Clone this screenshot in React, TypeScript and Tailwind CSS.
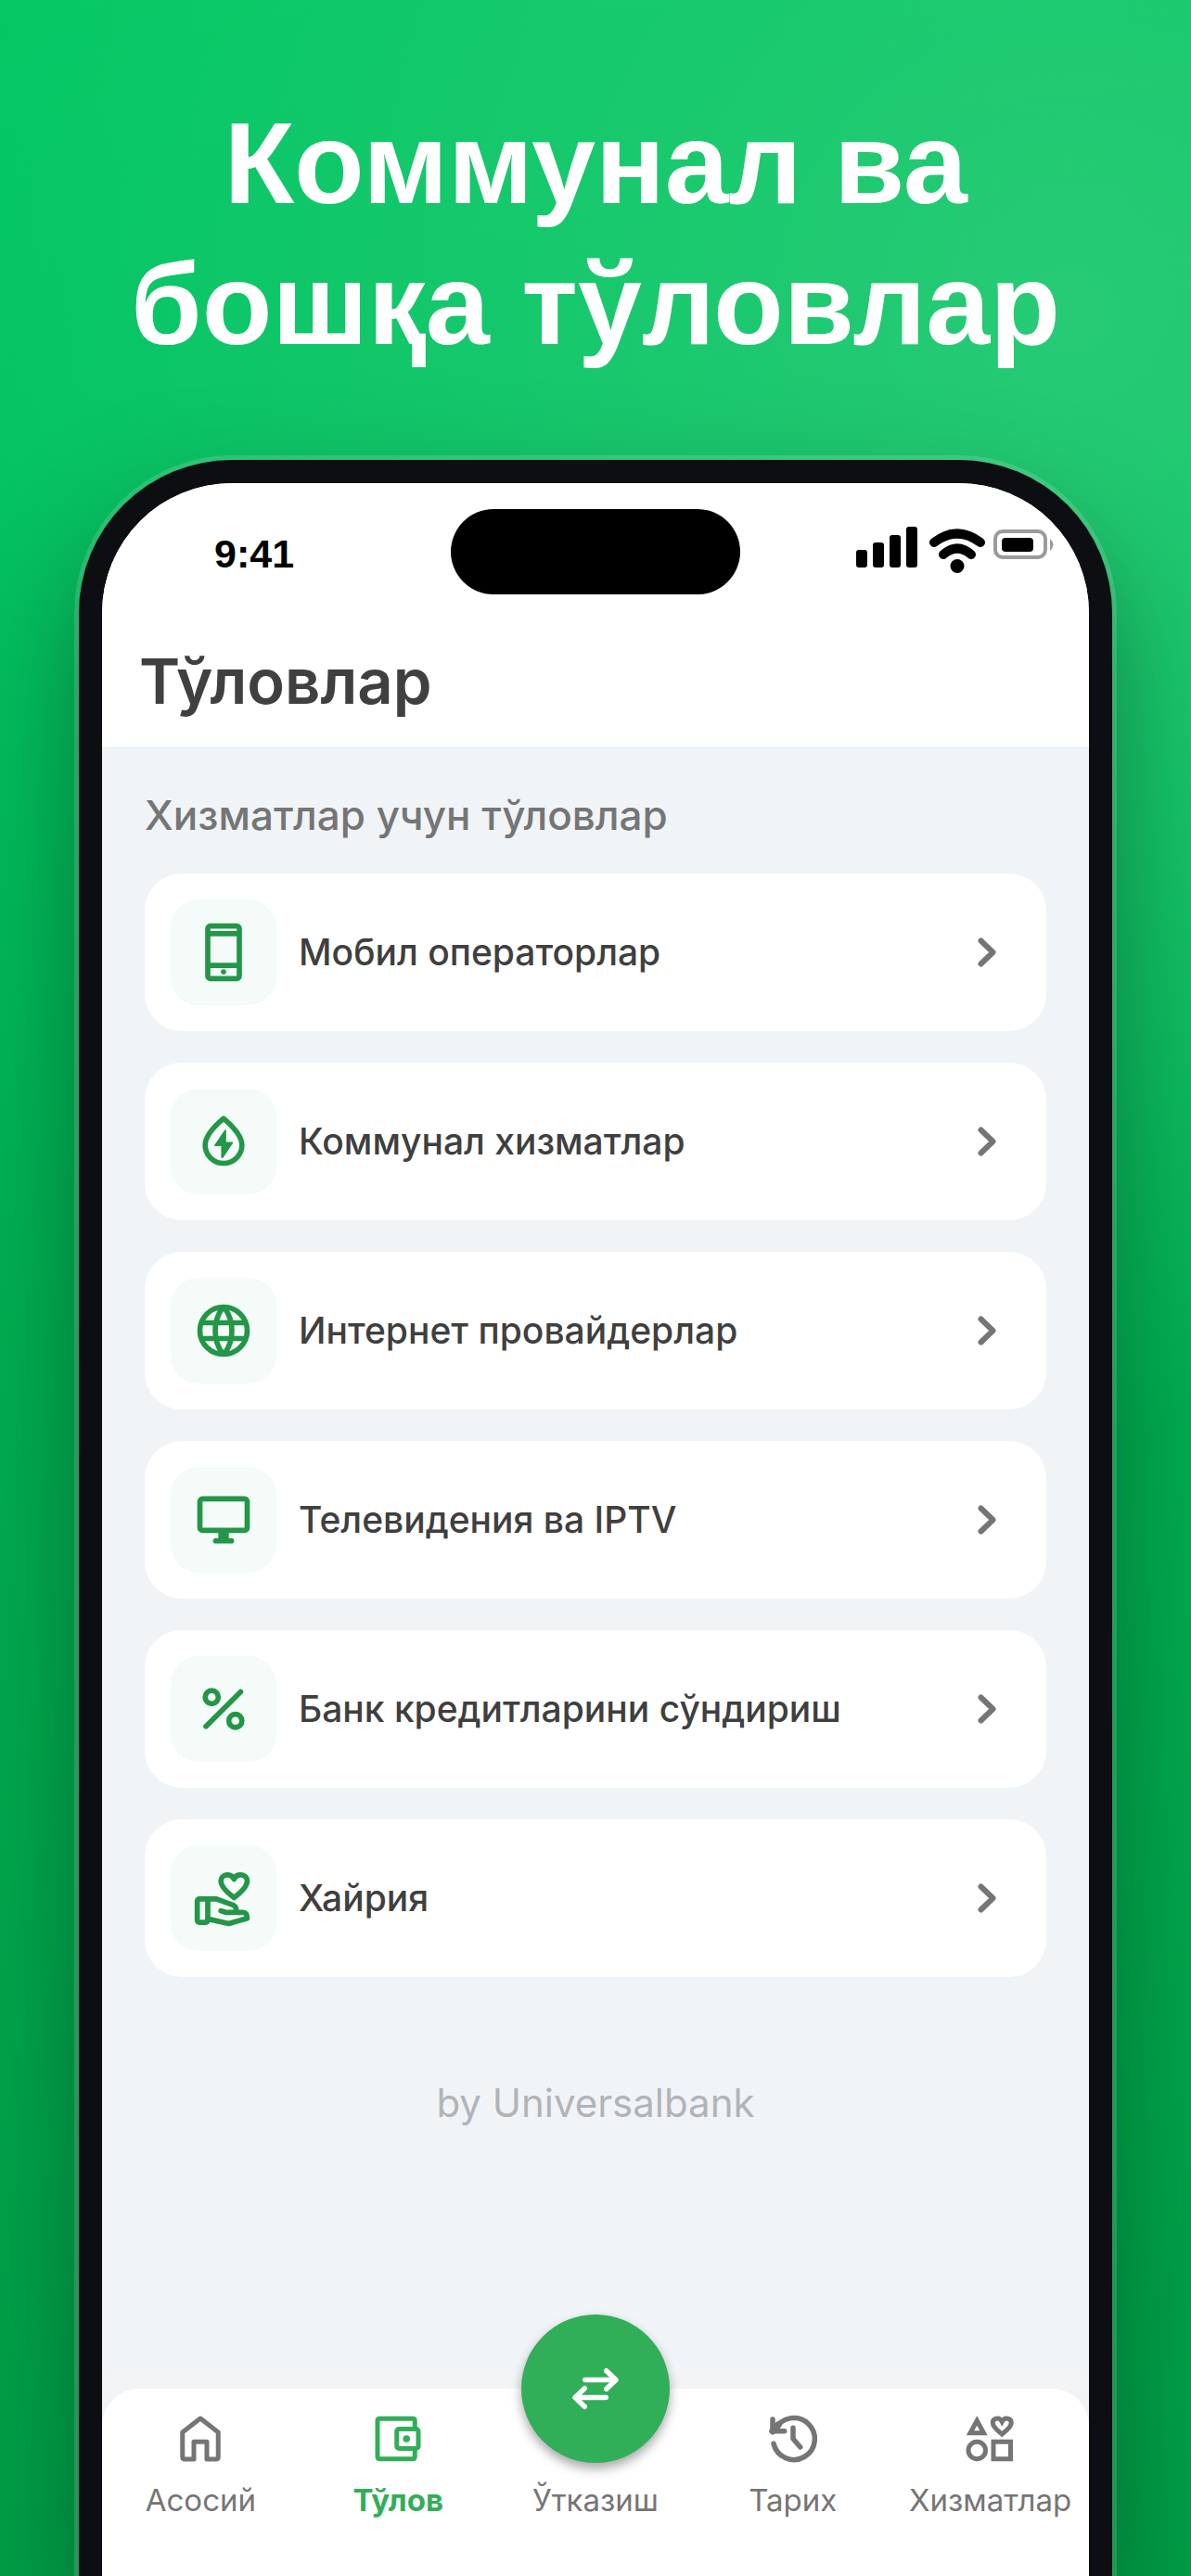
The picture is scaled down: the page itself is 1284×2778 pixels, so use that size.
import type { ReactNode } from "react";

type Service = {
  label: string;
  icon: ReactNode;
};

type Tab = {
  label: string;
  icon: ReactNode;
  active?: boolean;
};

const PhoneIcon = () => (
  <svg viewBox="0 0 24 24" className="size-[68px]" fill="none" stroke="currentColor" strokeWidth="2" aria-hidden="true">
    <rect x="6" y="2" width="12" height="20" rx="1" />
    <path d="M6 4.9h12M6 17h12" />
    <circle cx="12" cy="19.4" r="1" fill="currentColor" stroke="none" />
  </svg>
);

const DropIcon = () => (
  <svg viewBox="0 0 24 24" className="size-[68px]" fill="none" aria-hidden="true">
    <path
      d="M12 3.2c3.4 2.9 7 6.6 7 10.1a7 7 0 0 1-14 0c0-3.5 3.6-7.2 7-10.1z"
      stroke="currentColor"
      strokeWidth="2"
      strokeLinejoin="round"
    />
    <path d="M12.5 7.6 8.5 13.4q-.1.4.4.4h2.2v4.300q.3.500.8 0l3.600-5.400q.2-.5-.3-.5h-2.200V7.800q-.1-.4-.5-.2z" fill="currentColor" />
  </svg>
);

const GlobeIcon = () => (
  <svg viewBox="0 0 24 24" className="size-[68px]" fill="none" stroke="currentColor" strokeWidth="2" aria-hidden="true">
    <circle cx="12" cy="12" r="9" />
    <path d="M3.5 9h17M3.5 15h17M11.6 3.3c-3.7 5.2-3.7 12.2 0 17.4M12.4 3.3c3.7 5.2 3.7 12.2 0 17.4" />
  </svg>
);

const MonitorIcon = () => (
  <svg viewBox="0 0 24 24" className="size-[68px]" fill="none" stroke="currentColor" strokeWidth="2" aria-hidden="true">
    <rect x="3" y="4" width="18" height="12" rx="1" />
    <path d="M12 16v4" strokeWidth="4" />
    <path d="M9 20h6" strokeLinecap="round" />
  </svg>
);

const PercentIcon = () => (
  <svg viewBox="0 0 24 24" className="size-[68px]" fill="none" stroke="currentColor" strokeWidth="2" strokeLinecap="round" aria-hidden="true">
    <path d="M18.500 5.500 5.300 18.600" />
    <circle cx="7.5" cy="7.5" r="2.5" />
    <circle cx="16.5" cy="16.5" r="2.5" />
  </svg>
);

const CharityIcon = () => (
  <svg viewBox="0 0 24 24" className="size-[68px]" fill="none" stroke="currentColor" strokeWidth="2" strokeLinecap="round" strokeLinejoin="round" aria-hidden="true">
    <path d="M16 11.800c-2-1.500-5-4-5-6.300 0-2.500 3.600-3.500 5-.7 1.400-2.800 5-1.800 5 .7 0 2.300-3 4.800-5 6.300z" />
    <rect x="2" y="12.3" width="4" height="8.9" rx=".8" />
    <path d="M6 12.300h3.300l6.500 2.400q1 .6 1 1.700M11 16.800l1.800.6h6.700q1.500.2 1.500 2.300l-7 2L6 19.900" />
  </svg>
);

const HomeIcon = () => (
  <svg viewBox="0 0 24 24" className="size-[60px]" fill="none" stroke="currentColor" strokeWidth="2" strokeLinejoin="round" aria-hidden="true">
    <path d="M4.3 9.2 12 3.2l7.7 6v10.600q0 1-1 1h-3.900v-7.500H9.200v7.500H5.300q-1 0-1-1z" />
  </svg>
);

const WalletIcon = () => (
  <svg viewBox="0 0 24 24" className="size-[60px]" fill="none" stroke="currentColor" strokeWidth="2" aria-hidden="true">
    <path d="M19.300 7.800V4.300q0-1-1-1H4.200q-1 0-1 1v15.400q0 1 1 1h14.100q1 0 1-1v-3.500" />
    <rect x="11.5" y="7.8" width="9.3" height="8.4" rx="1" />
    <circle cx="15.7" cy="12" r="1.5" fill="currentColor" stroke="none" />
  </svg>
);

const HistoryIcon = () => (
  <svg viewBox="0 0 24 24" className="size-[60px]" fill="none" stroke="currentColor" strokeWidth="2.2" strokeLinecap="round" strokeLinejoin="round" aria-hidden="true">
    <path d="M3.6 14.1A9 9 0 1 0 4.3 8" />
    <path d="M3.2 3.600v5.100h5.100" />
    <path d="M3.200 8.700 5.600 6" strokeWidth="3" />
    <path d="M12 7.300V12l3.100 3.600" />
  </svg>
);

const ShapesIcon = () => (
  <svg viewBox="0 0 24 24" className="size-[60px]" fill="none" stroke="currentColor" strokeWidth="2" aria-hidden="true">
    <path d="M6.100 4.200 9 9.500H3.200z" />
    <path d="M16.900 10c-1.600-1.300-4-3-4-4.900 0-2.100 2.900-2.600 4-.5 1.100-2.100 4-1.600 4 .5 0 1.900-2.400 3.600-4 4.900z" />
    <circle cx="6.1" cy="17" r="3.7" />
    <rect x="13.2" y="13.3" width="7.4" height="7.4" />
  </svg>
);

const TransferIcon = () => (
  <svg viewBox="0 0 24 24" className="size-[60px]" fill="none" stroke="currentColor" strokeWidth="2.2" strokeLinecap="round" strokeLinejoin="round" aria-hidden="true">
    <path d="M7.500 8.200h13M16.700 4.300l4.100 3.900-4.100 3.900M16.500 15.800h-13M7.300 11.900l-4.100 3.900 4.100 3.900" />
  </svg>
);

const ChevronIcon = () => (
  <svg viewBox="0 0 20 32" className="h-8 w-5 text-[#757575]" fill="none" stroke="currentColor" strokeWidth="6" strokeLinecap="round" strokeLinejoin="round" aria-hidden="true">
    <path d="M3.500 3.500 16.500 16l-13 12.500" />
  </svg>
);

const services: Service[] = [
  { label: "Мобил операторлар", icon: <PhoneIcon /> },
  { label: "Коммунал хизматлар", icon: <DropIcon /> },
  { label: "Интернет провайдерлар", icon: <GlobeIcon /> },
  { label: "Телевидения ва IPTV", icon: <MonitorIcon /> },
  { label: "Банк кредитларини сўндириш", icon: <PercentIcon /> },
  { label: "Хайрия", icon: <CharityIcon /> },
];

const tabs: Tab[] = [
  { label: "Асосий", icon: <HomeIcon /> },
  { label: "Тўлов", icon: <WalletIcon />, active: true },
  { label: "Ўтказиш", icon: null },
  { label: "Тарих", icon: <HistoryIcon /> },
  { label: "Хизматлар", icon: <ShapesIcon /> },
];

const StatusBar = () => (
  <div className="grid grid-cols-[1fr_312px_1fr] items-center pt-7">
    <div className="pt-1 pl-[121px] font-['Liberation_Sans',sans-serif] text-[43px] leading-none font-bold text-black">9:41</div>
    <div className="h-[92px] rounded-full bg-black" />
    <div className="flex justify-end pr-9 pb-1.5">
      <svg viewBox="0 0 216 56" className="h-14 w-[216px]" aria-label="Signal, Wi-Fi, battery" role="img">
        <rect x="1" y="29" width="12" height="19" rx="3" />
        <rect x="19" y="21" width="12" height="27" rx="3" />
        <rect x="37" y="13" width="12" height="35" rx="3" />
        <rect x="55" y="4" width="12" height="44" rx="3" />
        <g fill="none" stroke="#000" strokeWidth="10" strokeLinecap="round">
          <path d="M85 21q25-19 50 0" />
          <path d="M95 34q15-13 30 0" />
        </g>
        <circle cx="110" cy="46.5" r="7.5" />
        <rect x="151" y="9" width="54" height="28" rx="8" fill="none" stroke="#9b9b9b" strokeWidth="4" />
        <rect x="158" y="16" width="34" height="15" rx="4" />
        <path d="M210 17q7 6 0 13z" fill="#9b9b9b" />
      </svg>
    </div>
  </div>
);

const ServiceRow = ({ label, icon }: Service) => (
  <button type="button" className="flex w-full items-center gap-6 rounded-[40px] bg-white p-7 text-left">
    <span className="flex size-[114px] shrink-0 items-center justify-center rounded-[30px] bg-[#f4fbf8] text-[#239648]">{icon}</span>
    <span className="flex-1 text-[39px] leading-[48px] font-medium text-[#3f3f3f]">{label}</span>
    <span className="pr-[26px]">
      <ChevronIcon />
    </span>
  </button>
);

const BottomNav = () => (
  <div className="mt-auto">
    <div className="h-[25px] rounded-t-[40px] bg-[#f3f4f6]" />
    <nav className="relative rounded-t-[40px] bg-white pt-6 pb-[58px]">
      <button
        type="button"
        aria-label="Ўтказиш"
        className="absolute -top-20 left-1/2 flex size-40 -translate-x-1/2 items-center justify-center rounded-full bg-[#31ae58] text-white shadow-[0_6px_12px_rgba(0,0,0,0.35)]"
      >
        <TransferIcon />
      </button>
      <div className="grid grid-cols-5">
        {tabs.map((tab) => (
          <a
            key={tab.label}
            href="#"
            aria-current={tab.active ? "page" : undefined}
            className={`flex flex-col items-center gap-3 text-[33px] leading-[48px] ${
              tab.active ? "font-bold text-[#31ae58]" : "text-[#757575]"
            }`}
          >
            <span className="size-[60px]">{tab.icon}</span>
            <span>{tab.label}</span>
          </a>
        ))}
      </div>
    </nav>
  </div>
);

export default function App() {
  return (
    <div className="flex min-h-screen flex-col overflow-hidden bg-[radial-gradient(circle_at_90%_12%,#27cb75_0%,transparent_45%),linear-gradient(175deg,#04c864_0%,#04c463_15%,#00ae51_50%,#009c45_100%)] font-[Inter,sans-serif]">
      <h1 className="px-20 pt-[100px] pb-[92px] text-center font-['Liberation_Sans',sans-serif] text-[124px] leading-[152px] font-bold text-white">
        Коммунал ва
        <br />
        бошқа тўловлар
      </h1>

      <main className="mx-[85px] flex flex-1 flex-col rounded-t-[165px] border-25 border-b-0 border-[#0c0e12] bg-[#0c0e12] shadow-[0_0_0_5px_rgba(255,255,255,0.14),0_60px_120px_rgba(0,70,35,0.55)]">
        <div className="flex flex-1 flex-col overflow-hidden rounded-t-[140px] bg-[#f0f4f7]">
          <header className="bg-white pb-8">
            <StatusBar />
            <h2 className="mt-14 pl-10 text-[67px] leading-[76px] font-semibold text-[#404040]">Тўловлар</h2>
          </header>

          <section className="px-[46px] pt-12">
            <h3 className="text-[44px] leading-[52px] font-medium text-[#757575]">Хизматлар учун тўловлар</h3>
            <div className="mt-[37px] flex flex-col gap-[34px]">
              {services.map((service) => (
                <ServiceRow key={service.label} {...service} />
              ))}
            </div>
            <p className="mt-28 mb-16 text-center text-[42px] leading-[48px] text-[#b1b4b7]">by Universalbank</p>
          </section>

          <BottomNav />
        </div>
      </main>
    </div>
  );
}
